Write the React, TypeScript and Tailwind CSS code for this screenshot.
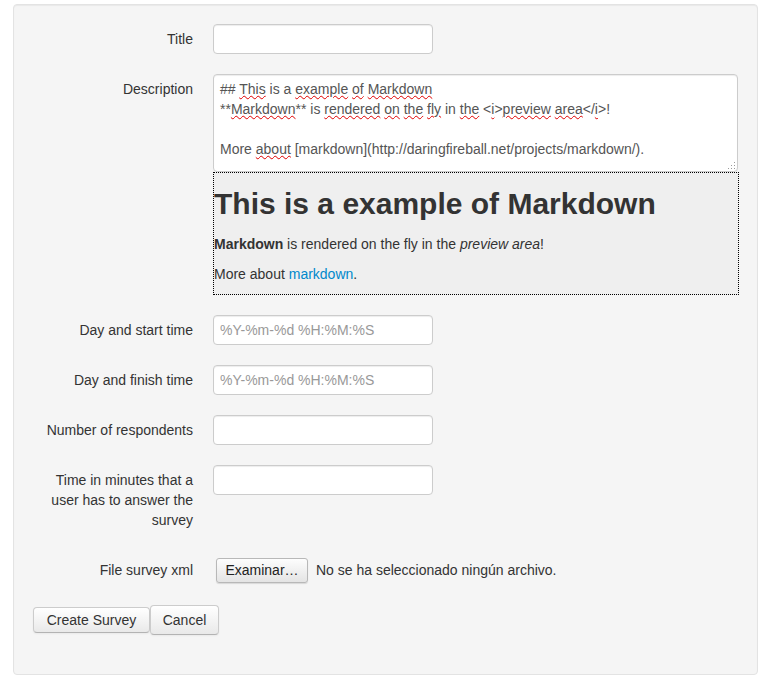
import type { ReactNode } from 'react'

// spell-check squiggle used inside the fake textarea
function Sp({ children }: { children: ReactNode }) {
  return (
    <span className="underline decoration-wavy decoration-[#e00000] decoration-1 underline-offset-[1px]">
      {children}
    </span>
  )
}

function Row({ label, children, className = '' }: { label: string; children: ReactNode; className?: string }) {
  return (
    <div className={`flex ${className}`}>
      <label className="w-[160px] shrink-0 pt-[5px] text-right leading-[20px]">{label}</label>
      <div className="ml-[20px]">{children}</div>
    </div>
  )
}

function TextInput({ placeholder }: { placeholder?: string }) {
  return (
    <input
      type="text"
      placeholder={placeholder}
      className="block h-[30px] w-[220px] rounded-[4px] border border-[#cccccc] bg-white px-[6px] py-[4px] text-[14px] leading-[20px] text-[#555555] shadow-[inset_0_1px_1px_rgba(0,0,0,0.075)] outline-none placeholder:text-[#999999]"
    />
  )
}

function ResizeGrip() {
  return (
    <svg className="absolute bottom-[1px] right-[1px]" width="9" height="9" viewBox="0 0 9 9">
      {[
        [7, 1],
        [7, 4],
        [4, 4],
        [7, 7],
        [4, 7],
        [1, 7],
      ].map(([x, y]) => (
        <rect key={`${x}-${y}`} x={x} y={y} width="1" height="1" fill="#9a9a9a" />
      ))}
    </svg>
  )
}

export default function App() {
  return (
    <div
      className="min-h-screen bg-white pl-[13px] pt-[4px] text-[14px] leading-[20px] text-[#333333]"
      style={{ fontFamily: '"Liberation Sans", Arial, sans-serif' }}
    >
      <div className="w-[745px] rounded-[4px] border border-[#e3e3e3] bg-[#f5f5f5] p-[19px] shadow-[inset_0_1px_1px_rgba(0,0,0,0.05)]">
        <Row label="Title" className="mb-[20px]">
          <TextInput />
        </Row>

        <Row label="Description" className="mb-[20px]">
          <div className="w-[526px]">
            {/* markdown source */}
            <div className="relative h-[98px] w-[525px] rounded-[4px] border border-[#cccccc] bg-white px-[6px] py-[4px] leading-[20px] text-[#555555] shadow-[inset_0_1px_1px_rgba(0,0,0,0.075)]">
              <div>
                ## <Sp>This</Sp> is a <Sp>example</Sp> <Sp>of</Sp> <Sp>Markdown</Sp>
              </div>
              <div>
                **<Sp>Markdown</Sp>** is <Sp>rendered</Sp> <Sp>on</Sp> <Sp>the</Sp> <Sp>fly</Sp> in{' '}
                <Sp>the</Sp> &lt;<Sp>i</Sp>&gt;<Sp>preview</Sp> <Sp>area</Sp>&lt;/<Sp>i</Sp>&gt;!
              </div>
              <div>&nbsp;</div>
              <div>
                More <Sp>about</Sp> [markdown](http://daringfireball.net/projects/markdown/).
              </div>
              <ResizeGrip />
            </div>

            {/* rendered preview */}
            <div className="border border-dotted border-black bg-[#efefef]">
              <h1 className="mb-[10px] mt-[11px] text-[30px] font-bold leading-[40px] text-[#333333]">
                This is a example of Markdown
              </h1>
              <p className="mb-[10px]">
                <strong>Markdown</strong> is rendered on the fly in the <em>preview area</em>!
              </p>
              <p className="mb-[10px]">
                More about <a className="text-[#0088cc]">markdown</a>.
              </p>
            </div>
          </div>
        </Row>

        <Row label="Day and start time" className="mb-[20px]">
          <TextInput placeholder="%Y-%m-%d %H:%M:%S" />
        </Row>

        <Row label="Day and finish time" className="mb-[20px]">
          <TextInput placeholder="%Y-%m-%d %H:%M:%S" />
        </Row>

        <Row label="Number of respondents" className="mb-[20px]">
          <TextInput />
        </Row>

        <Row label="Time in minutes that a user has to answer the survey" className="mb-[25px]">
          <TextInput />
        </Row>

        <Row label="File survey xml" className="mb-[20px]">
          <div className="flex h-[30px] items-center">
            <button className="ml-[3px] h-[25px] w-[92px] rounded-[3px] border border-[#b8b8b8] bg-linear-to-b from-[#fdfdfd] to-[#e4e4e4] text-[14px] leading-[20px] text-[#222222] shadow-[0_1px_1px_rgba(0,0,0,0.12)]">
              Examinar…
            </button>
            <span className="ml-[8px]">No se ha seleccionado ningún archivo.</span>
          </div>
        </Row>

        <div className="mb-[20px] flex items-center">
          <button className="h-[26px] w-[117px] rounded-[4px] border border-[#cccccc] border-b-[#b3b3b3] bg-linear-to-b from-white to-[#e9e9e9] text-[14px] leading-[20px] text-[#333333] shadow-[0_1px_2px_rgba(0,0,0,0.05)]">
            Create Survey
          </button>
          <button className="h-[30px] w-[69px] rounded-[4px] border border-[#cccccc] border-b-[#b3b3b3] bg-linear-to-b from-white to-[#e9e9e9] text-[14px] leading-[20px] text-[#333333] shadow-[0_1px_2px_rgba(0,0,0,0.05)]">
            Cancel
          </button>
        </div>
      </div>
    </div>
  )
}
